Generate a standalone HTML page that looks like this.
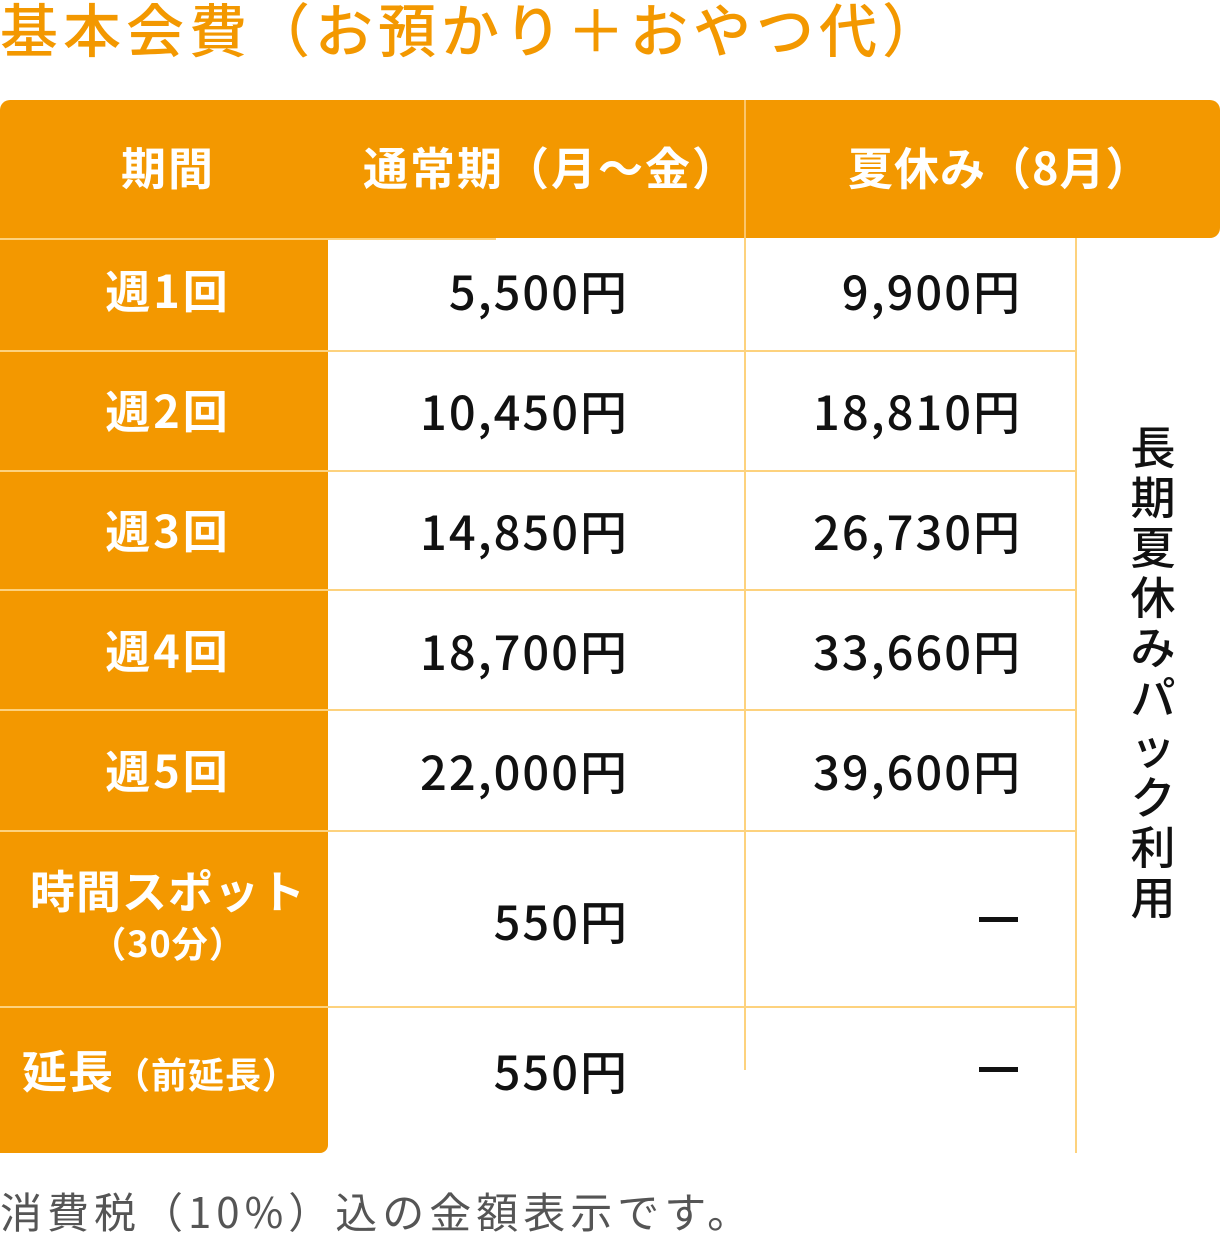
<!DOCTYPE html><html><head><meta charset="utf-8"><style>
body{margin:0;width:1220px;height:1241px;background:#fff;position:relative;overflow:hidden;font-family:"Noto Sans CJK JP","Liberation Sans",sans-serif}
.a{position:absolute}
.t{position:absolute;white-space:nowrap;line-height:1}
.h{color:#fff;font-weight:bold;font-size:45px;letter-spacing:2px}
.l{color:#fff;font-weight:bold;font-size:45px;width:336px;text-align:center;left:0;letter-spacing:3px}
.n{color:#111;font-size:47px;font-weight:500;text-align:right;letter-spacing:2px}
.hl{position:absolute;height:2px;background:#fdd27e}
.vl{position:absolute;width:2px;background:#fdd27e}
</style></head><body>
<div class="t" style="left:0;top:-2px;font-size:58px;color:#f39800;font-weight:500;letter-spacing:5px">基本会費（お預かり＋おやつ代）</div>
<div class="a" style="left:0;top:100px;width:1220px;height:138px;background:#f39800;border-radius:10px 10px 10px 0"></div>
<div class="a" style="left:0;top:238px;width:328px;height:915px;background:#f39800;border-radius:0 0 8px 0"></div>
<div class="vl" style="left:744px;top:100px;height:138px;background:#fbc56a"></div>
<div class="t h" style="left:121px;top:143px">期間</div>
<div class="t h" style="left:363px;top:143px">通常期（月～金）</div>
<div class="t h" style="left:848px;top:143px;letter-spacing:1px">夏休み（8月）</div>
<div class="hl" style="left:0;top:238px;width:496px"></div>
<div class="hl" style="left:0;top:350px;width:1076px"></div>
<div class="hl" style="left:0;top:470px;width:1076px"></div>
<div class="hl" style="left:0;top:589px;width:1076px"></div>
<div class="hl" style="left:0;top:709px;width:1076px"></div>
<div class="hl" style="left:0;top:830px;width:1076px"></div>
<div class="hl" style="left:0;top:1006px;width:1076px"></div>
<div class="vl" style="left:744px;top:238px;height:832px"></div>
<div class="vl" style="left:1075px;top:238px;height:915px"></div>
<div class="t l" style="top:266px">週1回</div>
<div class="t l" style="top:386px">週2回</div>
<div class="t l" style="top:506px">週3回</div>
<div class="t l" style="top:626px">週4回</div>
<div class="t l" style="top:746px">週5回</div>
<div class="t l" style="top:866px;letter-spacing:1px">時間スポット</div>
<div class="t l" style="top:924px;font-size:36px;letter-spacing:1px">（30分）</div>
<div class="t l" style="top:1046px;text-align:left;left:22px;letter-spacing:1px">延長<span style="font-size:36px">（前延長）</span></div>
<div class="t n" style="right:591px;top:266px">5,500円</div>
<div class="t n" style="right:591px;top:386px">10,450円</div>
<div class="t n" style="right:591px;top:506px">14,850円</div>
<div class="t n" style="right:591px;top:626px">18,700円</div>
<div class="t n" style="right:591px;top:746px">22,000円</div>
<div class="t n" style="right:591px;top:896px">550円</div>
<div class="t n" style="right:591px;top:1046px">550円</div>
<div class="t n" style="right:198px;top:266px">9,900円</div>
<div class="t n" style="right:198px;top:386px">18,810円</div>
<div class="t n" style="right:198px;top:506px">26,730円</div>
<div class="t n" style="right:198px;top:626px">33,660円</div>
<div class="t n" style="right:198px;top:746px">39,600円</div>
<div class="a" style="left:979px;top:917px;width:39px;height:5px;background:#111"></div>
<div class="a" style="left:979px;top:1067px;width:39px;height:5px;background:#111"></div>
<div class="t" style="left:1128px;top:420px;font-size:45px;line-height:50px;width:50px;white-space:normal;text-align:center;color:#111;font-weight:500">長期夏休みパック利用</div>
<div class="t" style="left:0;top:1190px;font-size:42px;color:#555;letter-spacing:5px">消費税（10%）込の金額表示です。</div>
</body></html>
